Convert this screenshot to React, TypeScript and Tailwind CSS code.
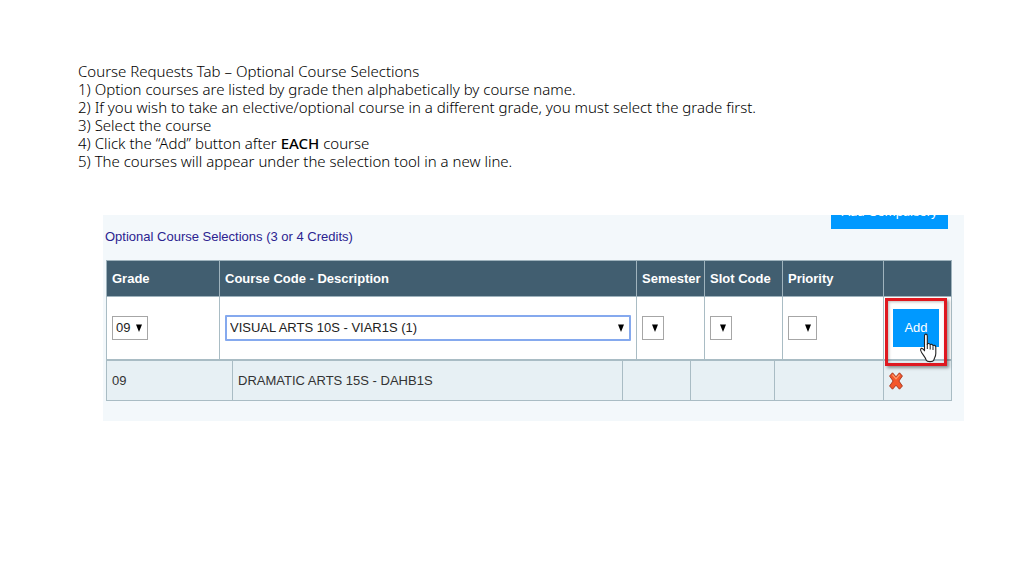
import type { ReactNode } from "react";

type PickerProps = {
  label: string;
  options: string[];
  className: string;
  arrowClass?: string;
};

function Picker({ label, options, className, arrowClass = "right-[5px]" }: PickerProps) {
  return (
    <div className={`relative bg-white ${className}`}>
      <select
        aria-label={label}
        className="block h-full w-full appearance-none bg-transparent pl-[3px] text-[13px] leading-5 text-[#222] outline-none"
      >
        {options.map((option) => (
          <option key={option}>{option}</option>
        ))}
      </select>
      <svg
        viewBox="0 0 6 8"
        className={`pointer-events-none absolute top-[7px] h-2 w-1.5 ${arrowClass}`}
        aria-hidden="true"
      >
        <path d="M0 0.5h6L3 8z" fill="#000" />
      </svg>
    </div>
  );
}

function HeaderCell({ children }: { children?: ReactNode }) {
  return (
    <th className="h-9 border border-[#9fb3bd] pl-[5px] text-left text-[13px] font-bold whitespace-nowrap text-white">
      {children}
    </th>
  );
}

function HandCursor() {
  return (
    <svg viewBox="0 0 17 30" className="absolute top-9 left-9 h-[30px] w-[17px]" aria-hidden="true">
      <path
        d="M4.500 3C4.500 .5 7.300 .5 7.300 3v8.500c.3-1.500 2.900-1.300 2.900.7.4-1.400 2.800-1.100 2.800.8.5-1.200 2.800-.9 2.800 1.200v6.300c0 3.200-1.500 4-1.900 6.500-.9 2.200-6.800 2.200-7.800 0-.6-3-4.700-6.500-5.400-9.500-.5-2.400 1.500-3.400 3.800.3z"
        fill="#fff"
        stroke="#222"
        strokeWidth="1.100"
        strokeLinejoin="round"
      />
      <path d="M7.300 11v5M10.200 12.500v4M13 13.500v3.500" stroke="#222" fill="none" />
    </svg>
  );
}

function DeleteIcon() {
  return (
    <svg viewBox="0 0 14 18" className="h-[18px] w-3.5" aria-hidden="true">
      <path
        d="M3.500.8 7 4.800 10.500.8 13.400 4 9.900 9 13.400 14 10.500 17.200 7 13.200 3.500 17.200.6 14 4.100 9 .6 4z"
        fill="#f4572b"
        stroke="#a93a22"
        strokeWidth="1"
        strokeLinejoin="round"
      />
      <path d="M3.400 2.600 7 6.900l3.600-4.300" fill="none" stroke="#ff9a6c" strokeWidth="1.200" />
    </svg>
  );
}

const cell = "border border-[#a9bcc4] px-[5px] text-left";

export default function App() {
  return (
    <main className="min-h-screen bg-white pt-[62px]">
      <h1 className="px-[78px] font-['Noto_Sans','Open_Sans',sans-serif] text-[15px] leading-[18px] font-light text-black">
        Course Requests Tab – Optional Course Selections
        <br />
        1) Option courses are listed by grade then alphabetically by course name.
        <br />
        2) If you wish to take an elective/optional course in a different grade, you must select the grade first.
        <br />
        3) Select the course
        <br />
        4) Click the “Add” button after <b className="font-medium">EACH</b> course
        <br />
        5) The courses will appear under the selection tool in a new line.
      </h1>

      <section className="mt-[45px] mr-[60px] ml-[103px] overflow-hidden bg-[#f3f8fb] pb-5 font-['Liberation_Sans',Arial,sans-serif]">
        <div className="flex justify-end pr-4">
          <button className="-mt-6 flex h-[38px] w-[117px] items-end justify-center bg-[#0099ff] pb-[7px] text-[13px] leading-5 whitespace-nowrap text-white">
            Add Compulsory
          </button>
        </div>
        <h2 className="pl-0.5 text-[13px] leading-4 text-[#2b2390]">Optional Course Selections (3 or 4 Credits)</h2>

        <div className="mt-[15px] mr-3 ml-[3px]">
          <table className="w-full table-fixed border-collapse bg-white">
            <colgroup>
              <col className="w-[113px]" />
              <col />
              <col className="w-[68px]" />
              <col className="w-[78px]" />
              <col className="w-[101px]" />
              <col className="w-[68px]" />
            </colgroup>
            <thead className="bg-[#415e70]">
              <tr>
                <HeaderCell>Grade</HeaderCell>
                <HeaderCell>Course Code - Description</HeaderCell>
                <HeaderCell>Semester</HeaderCell>
                <HeaderCell>Slot Code</HeaderCell>
                <HeaderCell>Priority</HeaderCell>
                <HeaderCell />
              </tr>
            </thead>
            <tbody>
              <tr>
                <td className={cell}>
                  <Picker label="Grade" options={["09"]} className="h-6 w-9 border border-[#a6a6a6]" />
                </td>
                <td className={cell}>
                  <Picker
                    label="Course"
                    options={["VISUAL ARTS 10S - VIAR1S (1)"]}
                    className="h-[26px] rounded-[1px] border-2 border-[#85a9ee]"
                  />
                </td>
                <td className={cell}>
                  <Picker label="Semester" options={[""]} className="h-6 w-[22px] border border-[#a6a6a6]" />
                </td>
                <td className={cell}>
                  <Picker label="Slot code" options={[""]} className="h-6 w-[22px] border border-[#a6a6a6]" />
                </td>
                <td className={cell}>
                  <Picker label="Priority" options={[""]} className="h-6 w-[29px] border border-[#a6a6a6]" />
                </td>
                <td className="border border-[#a9bcc4] p-0">
                  <div className="relative h-[62px] pt-3 pl-[9px]">
                    <button className="block h-[38px] w-[46px] bg-[#0099ff] text-[13px] text-white">Add</button>
                    <div className="pointer-events-none absolute top-px left-px h-[68px] w-[62px] border-[3px] border-[#df1820] shadow-[2px_2px_3px_#0006,inset_1px_1px_3px_#0004]" />
                    <HandCursor />
                  </div>
                </td>
              </tr>
            </tbody>
          </table>
          <table className="w-full table-fixed border-collapse bg-[#e7f0f4] text-[13px] text-[#333]">
            <colgroup>
              <col className="w-[126px]" />
              <col />
              <col className="w-[68px]" />
              <col className="w-[84px]" />
              <col className="w-[109px]" />
              <col className="w-[68px]" />
            </colgroup>
            <tbody>
              <tr className="h-10">
                <td className={cell}>09</td>
                <td className={cell}>DRAMATIC ARTS 15S - DAHB1S</td>
                <td className={cell} />
                <td className={cell} />
                <td className={cell} />
                <td className={cell}>
                  <button aria-label="Remove course" className="block">
                    <DeleteIcon />
                  </button>
                </td>
              </tr>
            </tbody>
          </table>
        </div>
      </section>
    </main>
  );
}
